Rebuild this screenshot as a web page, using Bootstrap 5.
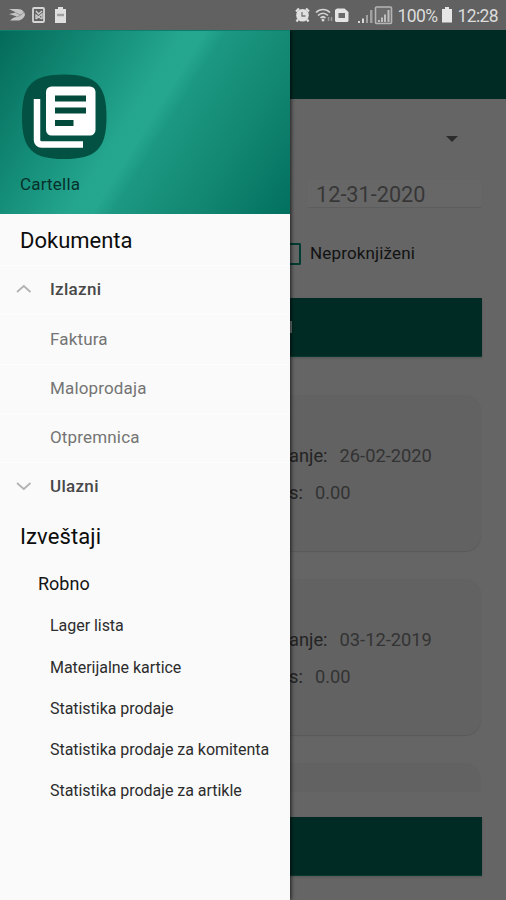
<!DOCTYPE html>
<html lang="sr">
<head>
<meta charset="utf-8">
<meta name="viewport" content="width=device-width, initial-scale=1">
<title>Cartella</title>
<link href="https://cdn.jsdelivr.net/npm/bootstrap@5.3.0/dist/css/bootstrap.min.css" rel="stylesheet">
<style>
  body { font-family: Roboto, "Noto Sans", sans-serif; background: #656565; color: #181818; }
  .screen { width: 506px; height: 900px; }
  .status { height: 30px; background: #616161; color: #dcdcdc; }
  .status svg { display: block; flex: none; }
  .status-text { font-size: 17.5px; line-height: 30px; padding-top: 2px; letter-spacing: -.6px; white-space: nowrap; }
  .pct { margin-left: 4px; }
  .drawer { width: 290px; background: #fafafa; box-shadow: 1px 0 4px rgba(0,0,0,.75); z-index: 2; }
  .drawer-head { height: 184px; padding: 43px 20px 0; color: #07302a;
    background: linear-gradient(122deg, #046a5a 0%, #138b76 25%, #24a58e 45%, #25a68f 51%, #1c9882 56%, #118570 78%, #02705f 100%); border-top: 1px solid #0c8070; }
  .app-name { font-size: 17px; line-height: 24px; margin-top: 12px; letter-spacing: .2px; }
  .section-title { font-size: 22px; padding: 2px 0 0 20px; height: 51px; color: #0c0c0c; }
  .section-title.second { height: 49px; letter-spacing: .1px; }
  .tree-row { height: 49.25px; padding: 0 0 0 16px; font-size: 17px; letter-spacing: .16px; color: #747474; border-top: 1px solid #fdfdfd; }
  .tree-row .slot { width: 34px; flex: none; line-height: 0; }
  .tree-row.group { color: #484848; font-weight: 500; letter-spacing: .3px; }
  .tree-row.group svg { margin-bottom: 2px; }
  .robno { font-size: 18px; height: 45px; padding: 2px 0 0 38px; color: #151515; }
  .report { font-size: 16px; height: 41.25px; padding: 1px 0 0 50px; color: #2c2c2c; letter-spacing: -.04px; white-space: nowrap; }
  .page { background: #656565; }
  .appbar { height: 68.5px; background: #002b24; flex: none; }
  .spinner { height: 80.5px; padding-right: 48px; flex: none; }
  .date-field { height: 28px; margin: 1px 25px 0 18px; padding-left: 8px; font-size: 21.7px; line-height: 29px; color: #373737;
    background: #676767; border-bottom: 1px solid #5d5d5d; flex: none; }
  .check-row { height: 24px; margin-top: 34px; font-size: 17px; letter-spacing: .15px; color: #121212; flex: none; }
  .check-box { width: 11px; height: 22px; border: 2px solid #003c31; border-left: 0; border-radius: 0 2px 2px 0; margin-right: 9px; }
  .action { height: 59px; margin-right: 24px; background: #002b24; border-bottom: 1px solid #083a32; box-shadow: 0 1px 2px rgba(0,0,0,.16); flex: none; }
  .action.first { margin-top: 31.500px; }
  .action.last { margin-top: 25px; }
  .label-end { width: 2px; height: 12px; background: #6d7a77; }
  .doc-card { height: 156px; margin-right: 25px; padding-top: 43px; background: #626262; border-radius: 0 16px 16px 0;
    box-shadow: 0 1px 1px rgba(0,0,0,.12); font-size: 18.3px; color: #333; flex: none; }
  .doc-card .line { height: 37px; }
  .doc-card .lbl { color: #242424; margin-left: -1px; }
  .doc-card .val { margin-left: 12px; }
  .doc-card.c1 { margin-top: 38px; }
  .doc-card.c2, .doc-card.c3 { margin-top: 28px; }
  .doc-card.cut { height: 29px; padding: 0; border-radius: 0 16px 0 0; box-shadow: none; }
</style>
<script src="https://cdn.jsdelivr.net/npm/bootstrap@5.3.0/dist/js/bootstrap.bundle.min.js"></script>
</head>
<body>
<div class="screen d-flex flex-column overflow-hidden">
  <header class="status d-flex align-items-center justify-content-between">
    <div class="d-flex align-items-center ps-2">
      <svg width="18" height="16" viewBox="0 0 18 16"><path d="M1 2h9c4 0 7 3 7 6-1 3-4 5.500-7 5.500H2l3-2.500 4-1.500L1 7l7-1.500z" fill="#c4c4c4"/><path d="M8 6l5 2-4 2M13 8l3-3" fill="none" stroke="#999"/></svg>
      <svg class="ms-1" width="15" height="16" viewBox="0 0 15 16"><rect x="3" y="1" width="11" height="14" rx="1" fill="none" stroke="#d6d6d6" stroke-width="1.800"/><path d="M6 4l2.500 3L12 4M6 12V8l2.500 2L12 7v5M6 12l2.500-2 3.500 2" fill="none" stroke="#d0d0d0" stroke-width="1.300"/></svg>
      <svg class="ms-2" width="15" height="18" viewBox="0 0 15 18"><path d="M5 1h5v2h3v14H2V3h3z" fill="#dfdfdf"/><path d="M4 9h7" stroke="#a0a0a0" stroke-width="2.500"/></svg>
    </div>
    <div class="d-flex align-items-center pe-2">
      <svg width="15" height="16" viewBox="0 0 15 16"><circle cx="7.500" cy="8.300" r="6.300" fill="#e0e0e0"/><path d="M1 4.500L4 1.500M14 4.500L11 1.500M3 12.500l-1.500 2M12 12.500l1.500 2" stroke="#e0e0e0" stroke-width="2.200"/><path d="M7 5v4h3.500" fill="none" stroke="#777" stroke-width="1.300"/></svg>
      <svg class="ms-1" width="20" height="16" viewBox="0 0 20 16"><path d="M2 5.500c4-4 10-4 14 0M4 8.500c3-3 7-3 10 0M6.500 11c1.500-1.500 3.500-1.500 5 0" fill="none" stroke="#d4d4d4" stroke-width="1.700"/><circle cx="9" cy="13" r="1.500" fill="#d4d4d4"/><path d="M14.500 10v4M17.500 10v4" stroke="#999" stroke-width="1.500"/></svg>
      <svg class="me-2" width="15" height="16" viewBox="0 0 15 16"><path d="M3 1.500h7.500L14.500 5v9l-1 1H2l-1-1V3z" fill="#e4e4e4"/><rect x="4.500" y="6" width="6.500" height="5" fill="#6a6a6a"/></svg>
      <svg width="36" height="20" viewBox="0 0 36 20"><path d="M1 18v-2h2v2zM5 18v-4.500h2V18z" fill="#d8d8d8"/><path d="M9 18V10h2v8zM13 18V5h2.500v13z" fill="#a0a0a0"/><rect x="18.500" y="2" width="16" height="16.500" rx="1" fill="#6c6c6c" stroke="#b4b4b4" stroke-width="1.600"/><path d="M21 17v-2h2v2zM24 17v-4.500h2V17zM27 17V9.500h2V17zM30.500 17V5h2v12z" fill="#bdbdbd"/></svg>
      <span class="status-text pct">100%</span>
      <svg class="mx-1" width="12" height="16" viewBox="0 0 12 16"><path d="M4 0h4v2h3v13.500H1V2h3z" fill="#e6e6e6"/></svg>
      <span class="status-text">12:28</span>
    </div>
  </header>

  <div class="d-flex flex-grow-1 overflow-hidden">
    <nav class="drawer d-flex flex-column flex-shrink-0">
      <div class="drawer-head">
        <svg class="d-block" width="88" height="86" viewBox="0 0 88 86"><path d="M44 .5C76 .5 86.500 11 86.500 43S76 85 44 85 2 75 2 43 12 .5 44 .5z" fill="#025142"/><path d="M17 25v41a4.500 4.500 0 0 0 4.500 4.500H63" fill="none" stroke="#fff" stroke-width="6.500"/><rect x="26" y="12.500" width="49.500" height="49" rx="5.500" fill="#fff"/><path d="M35 24.500h31M35 36.500h31M35 49h18.500" stroke="#024a3b" stroke-width="6"/></svg>
        <div class="app-name">Cartella</div>
      </div>
      <div class="section-title d-flex align-items-center">Dokumenta</div>
      <div class="tree-row group d-flex align-items-center"><span class="slot"><svg width="16" height="10" viewBox="0 0 16 10"><path d="M1 8l6.800-6L14.500 8" fill="none" stroke="#b2b2b2" stroke-width="1.700"/></svg></span>Izlazni</div>
      <div class="tree-row d-flex align-items-center"><span class="slot"></span>Faktura</div>
      <div class="tree-row d-flex align-items-center"><span class="slot"></span>Maloprodaja</div>
      <div class="tree-row d-flex align-items-center"><span class="slot"></span>Otpremnica</div>
      <div class="tree-row group d-flex align-items-center"><span class="slot"><svg width="16" height="10" viewBox="0 0 16 10"><path d="M1 2l6.800 6L14.500 2" fill="none" stroke="#b2b2b2" stroke-width="1.700"/></svg></span>Ulazni</div>
      <div class="section-title second d-flex align-items-center">Izveštaji</div>
      <div class="robno d-flex align-items-center">Robno</div>
      <div class="report d-flex align-items-center">Lager lista</div>
      <div class="report d-flex align-items-center">Materijalne kartice</div>
      <div class="report d-flex align-items-center">Statistika prodaje</div>
      <div class="report d-flex align-items-center">Statistika prodaje za komitenta</div>
      <div class="report d-flex align-items-center">Statistika prodaje za artikle</div>
    </nav>

    <main class="page d-flex flex-column flex-grow-1">
      <div class="appbar"></div>
      <div class="spinner d-flex align-items-center justify-content-end"><svg width="12" height="6" viewBox="0 0 12 6"><path d="M0 0h12L6 6z" fill="#2b2b2b"/></svg></div>
      <div class="date-field">12-31-2020</div>
      <div class="check-row d-flex align-items-center"><span class="check-box"></span>Neproknjiženi</div>
      <div class="action first d-flex align-items-center"><span class="label-end"></span></div>
      <section class="doc-card c1">
        <div class="line d-flex align-items-center"><span class="lbl">anje:</span><span class="val">26-02-2020</span></div>
        <div class="line d-flex align-items-center"><span class="lbl">s:</span><span class="val">0.00</span></div>
      </section>
      <section class="doc-card c2">
        <div class="line d-flex align-items-center"><span class="lbl">anje:</span><span class="val">03-12-2019</span></div>
        <div class="line d-flex align-items-center"><span class="lbl">s:</span><span class="val">0.00</span></div>
      </section>
      <section class="doc-card cut c3"></section>
      <div class="action last"></div>
    </main>
  </div>
</div>
</body>
</html>
